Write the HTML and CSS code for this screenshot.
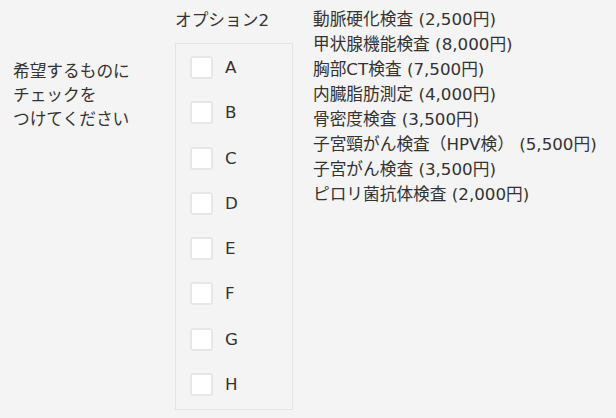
FILE: index.html
```html
<!DOCTYPE html>
<html lang="ja">
<head>
<meta charset="utf-8">
<link rel="stylesheet" href="styles.css">
</head>
<body>
<div class="row">
  <div class="label">希望するものに<br>チェックを<br>つけてください</div>
  <div class="opt">
    <div class="opt-head">オプション2</div>
    <div class="opt-box">
      <label class="item"><span class="cb"></span><span class="lt">A</span></label>
      <label class="item"><span class="cb"></span><span class="lt">B</span></label>
      <label class="item"><span class="cb"></span><span class="lt">C</span></label>
      <label class="item"><span class="cb"></span><span class="lt">D</span></label>
      <label class="item"><span class="cb"></span><span class="lt">E</span></label>
      <label class="item"><span class="cb"></span><span class="lt">F</span></label>
      <label class="item"><span class="cb"></span><span class="lt">G</span></label>
      <label class="item"><span class="cb"></span><span class="lt">H</span></label>
    </div>
  </div>
  <ul class="list">
    <li>動脈硬化検査 (2,500円)</li>
    <li>甲状腺機能検査 (8,000円)</li>
    <li>胸部CT検査 (7,500円)</li>
    <li>内臓脂肪測定 (4,000円)</li>
    <li>骨密度検査 (3,500円)</li>
    <li>子宮頸がん検査（HPV検） (5,500円)</li>
    <li>子宮がん検査 (3,500円)</li>
    <li>ピロリ菌抗体検査 (2,000円)</li>
  </ul>
</div>
</body>
</html>
```
FILE: styles.css
```css
html, body {
  margin: 0;
  padding: 0;
  background: #f4f4f4;
}
body {
  font-family: "DejaVu Sans", "Noto Sans CJK JP", sans-serif;
  font-size: 16.7px;
  color: #333;
  width: 616px;
  height: 418px;
  overflow: hidden;
}
.row {
  display: flex;
  align-items: flex-start;
}
.label {
  width: 175px;
  padding-left: 13px;
  padding-top: 59px;
  line-height: 24px;
  box-sizing: border-box;
  flex: none;
}
.opt {
  width: 118px;
  flex: none;
}
.opt-head {
  height: 43px;
  line-height: 41px;
}
.opt-box {
  border: 1px solid #e4e4e4;
  height: 367px;
  box-sizing: border-box;
  padding: 12px 0 0 14px;
  display: flex;
  flex-direction: column;
  gap: 22.3px;
}
.item {
  display: flex;
  align-items: center;
  height: 23px;
}
.cb {
  width: 23px;
  height: 23px;
  box-sizing: border-box;
  border: 2px solid #e7e7e7;
  border-radius: 3px;
  background: #fff;
  flex: none;
}
.lt {
  margin-left: 12px;
  line-height: 23px;
}
.list {
  list-style: none;
  margin: 0;
  padding: 7px 0 0 20px;
}
.list li {
  line-height: 25px;
  white-space: nowrap;
}
```
